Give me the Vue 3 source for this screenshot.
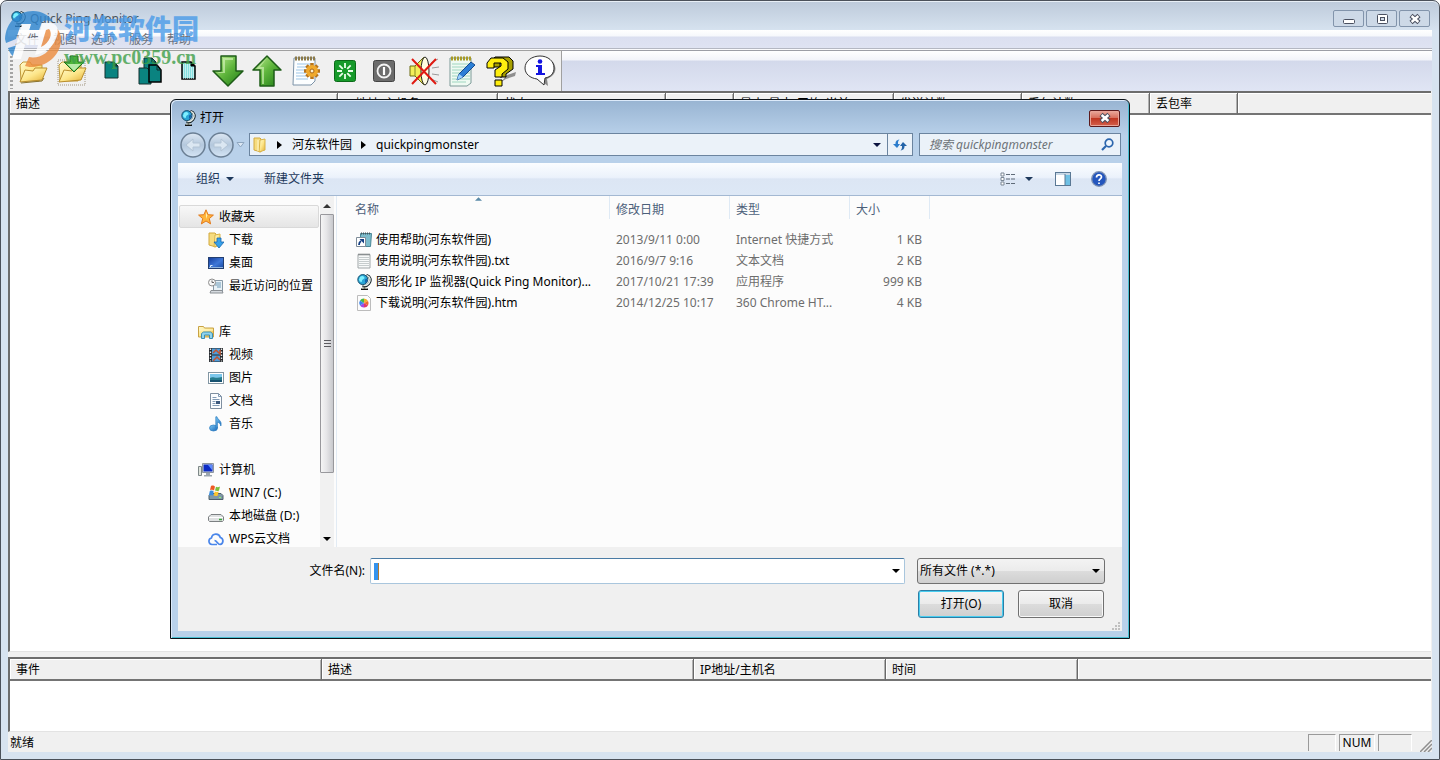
<template>
  <svg class="sprite" aria-hidden="true">
    <defs>
      <linearGradient id="gFolder" x1="0" y1="0" x2="1" y2="1">
        <stop offset="0" stop-color="#fffbd0" />
        <stop offset="0.5" stop-color="#fde68a" />
        <stop offset="1" stop-color="#e2ad33" />
      </linearGradient>
      <linearGradient id="gGreen" x1="0" y1="0" x2="1" y2="1">
        <stop offset="0" stop-color="#c9f29c" />
        <stop offset="0.5" stop-color="#5fb53c" />
        <stop offset="1" stop-color="#1d7a16" />
      </linearGradient>
      <linearGradient id="gBlue" x1="0" y1="0" x2="1" y2="1">
        <stop offset="0" stop-color="#7cc8f5" />
        <stop offset="1" stop-color="#1566b8" />
      </linearGradient>
      <linearGradient id="gScreen" x1="0" y1="0" x2="1" y2="1">
        <stop offset="0" stop-color="#123a9a" />
        <stop offset="0.55" stop-color="#3f78d8" />
        <stop offset="1" stop-color="#16479f" />
      </linearGradient>
      <linearGradient id="gNav" x1="0" y1="0" x2="0" y2="1">
        <stop offset="0" stop-color="#dde8f3" />
        <stop offset="0.5" stop-color="#b4c8dd" />
        <stop offset="1" stop-color="#d5e5f5" />
      </linearGradient>
    </defs>

    <symbol id="globe" viewBox="0 0 16 16">
      <path d="M10.5 1.2c4 1 5.200 5.300 2.500 8.600-1.500 1.900-4 2.800-6.500 2.200" fill="none" stroke="#17252c" stroke-width="2.600" />
      <path d="M10.800 1.500c3.500 1.200 4.300 4.800 2 7.800-1.300 1.700-3.300 2.500-5.500 2.300" fill="none" stroke="#e8efe8" stroke-width="1.500" />
      <circle cx="6.800" cy="5.600" r="5" fill="#2aa6d6" stroke="#17506e" stroke-width="1" />
      <path d="M4 3c2-2 4-1 4.500.5S6 5 6 7 3 7.500 3 5.500z" fill="#7ef0ff" />
      <path d="M9 5.500l2-1v3L9 9z" fill="#1563b0" />
      <path d="M5 15.200h7M8.500 12.500v2.500" stroke="#111" stroke-width="1.600" />
      <path d="M6 14h5" stroke="#c8cdb8" stroke-width="1" />
    </symbol>

    <symbol id="open" viewBox="0 0 32 32">
      <path d="M3 10l3-3h7l2 3h10v5l-3 11H4z" fill="url(#gFolder)" stroke="#c19a3a" />
      <path d="M3 27l5-12 8 1 2-3h12l-5 12z" fill="url(#gFolder)" stroke="#b98e2c" />
      <path d="M4 28l21-2 2-3" fill="none" stroke="#8a7430" stroke-width="1" />
    </symbol>
    <symbol id="load" viewBox="0 0 32 32">
      <path d="M2 5h27v25H2z" fill="none" stroke="#c9c3b8" stroke-width="2" stroke-dasharray="1 1" />
      <path d="M3 10l3-3h7l2 3h10v5l-3 11H4z" fill="url(#gFolder)" stroke="#c19a3a" />
      <path d="M3 27l5-12 8 1 2-3h12l-5 12z" fill="url(#gFolder)" stroke="#b98e2c" />
      <path d="M14 1h8v6h6l-10 10L8 7h6z" fill="#4fb63a" stroke="#1e6c1c" />
      <path d="M11 9h14l-7 7z" fill="#b8e9a8" />
    </symbol>
    <symbol id="doc" viewBox="0 0 32 32">
      <path d="M10 7h9l4 4v12H10z" fill="#0a8380" stroke="#14302f" />
      <path d="M19 7v4h4z" fill="#04494a" stroke="#0c2a2a" />
    </symbol>
    <symbol id="docs" viewBox="0 0 32 32">
      <path d="M10 3h8l4 4v13H10z" fill="#0a8380" stroke="#14302f" />
      <path d="M5 13h8l4 4v12H5z" fill="#0a8380" stroke="#14302f" />
      <path d="M15 10h8l4 5v12H15z" fill="#0a8380" stroke="#000" stroke-width="1.500" />
      <path d="M18 3v4h4M23 10v5h4" fill="none" stroke="#0c2a2a" />
    </symbol>
    <symbol id="newdoc" viewBox="0 0 32 32">
      <path d="M9 7h9l4 4v13H9z" fill="#86e0e0" stroke="#000" stroke-width="1.500" />
      <path d="M10 9h7M10 11h8M10 13h11M10 15h11M10 17h11M10 19h11M10 21h11M10 23h11" stroke="#fff" stroke-dasharray="1 1" />
      <path d="M18 7v4h4z" fill="#000" stroke="#000" />
    </symbol>
    <symbol id="down" viewBox="0 0 32 32">
      <path d="M9 1h15v15h7L16 31 1 16h8z" fill="url(#gGreen)" stroke="#1e5c18" stroke-width="1.500" stroke-linejoin="round" />
      <path d="M11 3h10v2H13v13h-6l-2-1h6z" fill="#d8f5c0" opacity="0.6" />
    </symbol>
    <symbol id="up" viewBox="0 0 32 32">
      <path d="M9 31h14V15h7L16 1 2 15h7z" fill="url(#gGreen)" stroke="#1e5c18" stroke-width="1.500" stroke-linejoin="round" />
      <path d="M16 3L5 14h6v15h2V12H9z" fill="#d8f5c0" opacity="0.6" />
    </symbol>
    <symbol id="config" viewBox="0 0 32 32">
      <path d="M4 3h21v23l-4 4H3z" fill="#fcfeff" stroke="#7c93a8" />
      <path d="M7 9h14M7 12h13M6 15h10M6 18h10M6 21h10M6 24h12" stroke="#9cc5e6" />
      <path d="M5 3.500h20" stroke="#8c7a4a" stroke-width="4" stroke-dasharray="2 1" />
      <path d="M22 8v16M14 16h16M16.500 10.500l11 11M27.500 10.500l-11 11" stroke="#b8741a" stroke-width="3.500" />
      <circle cx="22" cy="16" r="6" fill="#f0a92c" />
      <circle cx="22" cy="16" r="2" fill="#fff2d0" stroke="#a86412" />
    </symbol>
    <symbol id="start" viewBox="0 0 32 32">
      <rect x="5.500" y="5.500" width="21" height="21" rx="2" fill="#169a2a" stroke="#0b6a18" />
      <path d="M16 8v5M16 19v5M8 16h5M19 16h5M10.300 10.300l3.500 3.500M18.200 18.200l3.500 3.500M21.700 10.300l-3.500 3.500M13.800 18.200l-3.500 3.500" stroke="#eaffea" stroke-width="1.800" />
    </symbol>
    <symbol id="stop" viewBox="0 0 32 32">
      <rect x="5.500" y="5.500" width="21" height="21" rx="2" fill="#6c6c6c" stroke="#444" />
      <circle cx="16" cy="16" r="6.500" fill="none" stroke="#f4f4f4" stroke-width="1.800" />
      <path d="M16 12v8" stroke="#fff" stroke-width="2.200" />
    </symbol>
    <symbol id="mute" viewBox="0 0 32 32">
      <path d="M3 11h5l9-9v28l-9-9H3z" fill="#f3ee5a" stroke="#6a6a10" />
      <path d="M8 11v10" stroke="#8a8a20" />
      <ellipse cx="18" cy="16" rx="4" ry="14" fill="#fffde0" stroke="#222" />
      <path d="M24 8l7-4M25 13l7-1M25 19l7 1M24 24l7 3" stroke="#999" />
      <path d="M5 4l24 25M29 4L5 29" stroke="#e01a12" stroke-width="2" />
    </symbol>
    <symbol id="edit" viewBox="0 0 32 32">
      <path d="M4 3h21v25l-4 3H4z" fill="#effaf2" stroke="#7c9a98" />
      <path d="M6 9h18M6 12h18M6 15h18M6 18h18M6 21h18M6 24h18M6 27h14" stroke="#9fd6c0" />
      <path d="M5 3.500h20" stroke="#a89a28" stroke-width="4" stroke-dasharray="2 1" />
      <path d="M13 19L25 7l4 3-12 12-6 3z" fill="#2b7fd6" stroke="#164a8c" />
      <path d="M11 25l2-6 4 3z" fill="#9ad0ff" />
    </symbol>
    <symbol id="help" viewBox="0 0 32 32">
      <path d="M16 27l6-7 9-3-1 4-9 3z" fill="#8f8f8f" />
      <path d="M4 12V7l4-5h14l4 4v8l-7 5v3h-6v-7l6-4V8h-6v4z" transform="translate(2 0)" fill="#a8a000" stroke="#000" />
      <path d="M2 12V8l4-5h12l5 4v7l-6 5v3h-7v-7l6-4V8H9v5H2zM10 25h7v6h-7z" fill="#ffee10" stroke="#000" stroke-linejoin="round" />
    </symbol>
    <symbol id="info" viewBox="0 0 32 32">
      <path d="M29 7c5 7 2 14-6 17l1 7-8-6z" fill="#888" />
      <path d="M16 1c8 0 14 5 14 12 0 5-3 9-9 10l-1 7-7-6C6 23 1 19 1 13 1 6 8 1 16 1z" fill="#fff" stroke="#333" />
      <path d="M12 10h6v8h3v2h-9v-2h2v-6h-2z" fill="#1515e0" />
      <circle cx="16" cy="6.500" r="2.300" fill="#1515e0" />
    </symbol>

    <symbol id="folder" viewBox="0 0 16 16">
      <path d="M2 1h6l1 1v13l-7-2z" fill="#f6dc80" stroke="#d2a93e" />
      <path d="M8 3l5-1v11l-6 2z" fill="url(#gFolder)" stroke="#d9b44a" />
      <path d="M6 3v11" stroke="#fff7cc" />
    </symbol>
    <symbol id="star" viewBox="0 0 16 16">
      <path d="M8 .8l2.100 4.900 5.300.4-4.100 3.500 1.300 5.300L8 12l-4.600 2.900 1.300-5.300L.6 6.100l5.300-.4z" fill="#ffb53c" stroke="#e37a1c" />
      <path d="M8 3l1.300 3.500L8 10z" fill="#fff1b8" />
    </symbol>
    <symbol id="downloads" viewBox="0 0 16 16">
      <path d="M1 1h6l1 1v13l-7-2z" fill="#f6dc80" stroke="#d2a93e" />
      <path d="M7 3l5-1v11l-6 2z" fill="url(#gFolder)" stroke="#d9b44a" />
      <path d="M9 6h4v4h3l-5 6-5-6h3z" fill="#36a1ea" stroke="#1b67ae" stroke-width=".8" />
    </symbol>
    <symbol id="desktop" viewBox="0 0 16 16">
      <rect x=".5" y="2.500" width="15" height="11" fill="url(#gScreen)" stroke="#243f70" />
      <path d="M1 12.500h14" stroke="#91b5df" />
      <path d="M2.500 12v-1.500h2" stroke="#e0f0ff" fill="none" />
    </symbol>
    <symbol id="recent" viewBox="0 0 16 16">
      <path d="M5.500 2.500h9v11h-9z" fill="#e8f1f6" stroke="#8798a5" />
      <path d="M7 5h6M7 7h6M9 9h4" stroke="#6f9bb8" />
      <path d="M3 12.500h11l1 2.500H2z" fill="#d6dbe0" stroke="#8a8f94" />
      <circle cx="4" cy="4.500" r="3.500" fill="#f8f8f8" stroke="#8e8e8e" />
      <path d="M4 2.500v2h2" fill="none" stroke="#666" />
    </symbol>
    <symbol id="library" viewBox="0 0 16 16">
      <path d="M.5 2.500h5l1 1.500h9v9H.5z" fill="url(#gFolder)" stroke="#c8a245" />
      <path d="M1 6h14" stroke="#fff6c8" />
      <path d="M3.500 14.500v-5l2-1.500h7l2 1.500v5h-3V11h-5v3.500z" fill="#8fd4ee" stroke="#3d8fb3" />
    </symbol>
    <symbol id="video" viewBox="0 0 16 16">
      <path d="M1 1h14v14H1z" fill="#23282d" />
      <path d="M4 1.500h8v6H4zM4 8.500h8v6H4z" fill="#4e9ddb" />
      <path d="M5 6l3-3 4 4v-4M5 14l4-4 3 3" stroke="#c4532f" fill="none" stroke-width="1.500" />
      <path d="M2.500 1.500v13M13.500 1.500v13" stroke="#e8e8e8" stroke-width="1.400" stroke-dasharray="1.500 1.500" />
    </symbol>
    <symbol id="picture" viewBox="0 0 16 16">
      <rect x=".5" y="2.500" width="15" height="11" fill="#fff" stroke="#8296a3" />
      <path d="M2 4h12v8H2z" fill="#7cc7ec" />
      <path d="M2 8c3-2 5 1 12-1v5H2z" fill="#267c8e" />
      <path d="M2 10h12v2H2z" fill="#175270" />
    </symbol>
    <symbol id="document" viewBox="0 0 16 16">
      <path d="M2.500.5h8l3 3v12h-11z" fill="#fbfdff" stroke="#7f8fa0" />
      <path d="M10.500.5v3h3M4.500 4.500h4M4.500 6.500h7M4.500 8.500h3M4.500 10.500h3M4.500 12.500h7" fill="none" stroke="#829bb5" />
      <path d="M8 8h4v3H8z" fill="#3b587d" />
    </symbol>
    <symbol id="music" viewBox="0 0 16 16">
      <ellipse cx="5.500" cy="12" rx="4" ry="3" fill="url(#gBlue)" stroke="#2c7cc0" stroke-width=".7" />
      <path d="M7.800 12V.8H9c.5 3 5.500 4 3.800 9.200-.3-2.500-1.600-3.400-3.400-3.800V12z" fill="url(#gBlue)" stroke="#2c7cc0" stroke-width=".7" />
    </symbol>
    <symbol id="computer" viewBox="0 0 16 16">
      <path d="M.5 4.500h3v9h-3z" fill="#dfe4dc" stroke="#7d8788" />
      <path d="M4.500 1.500h11v9h-11z" fill="#d3d9e0" stroke="#8c96a0" />
      <path d="M5.500 2.500h9v7h-9z" fill="#0c2bc4" />
      <path d="M10 3h4v5z" fill="#5c8dff" />
      <path d="M8 11h4v2h2v1.500H6V13h2z" fill="#9da7b0" />
    </symbol>
    <symbol id="windrive" viewBox="0 0 16 16">
      <path d="M1 10.500l2-2h10l2 2v4H1z" fill="#7f99a8" stroke="#4e606b" />
      <path d="M3 1c2-1 3 0 4 .5L6 5.500C5 4.500 4 4.500 2 5z" fill="#ee5a24" />
      <path d="M8 1.800c1 .5 3 .5 4-.3l-1 4c-1 .8-3 .5-4 0z" fill="#7cbf3a" />
      <path d="M1.800 6c2-1 3 0 4 .5l-1 4c-1-.7-2-.7-4 0z" fill="#3b8ede" />
      <path d="M6.700 6.500c1 .6 3 .6 4 0l-1 4c-1 .8-3 .5-4 0z" fill="#fcc52c" />
      <path d="M11 12.500h2" stroke="#8cff5c" />
    </symbol>
    <symbol id="drive" viewBox="0 0 16 16">
      <path d="M.5 9l2.500-2.500h10L15.500 9v3.500l-1 1h-13l-1-1z" fill="#dfe1e2" stroke="#7c8082" />
      <path d="M1 9.500h14" stroke="#fff" />
      <path d="M11 11.500h3" stroke="#3aa53a" stroke-width="1.500" />
    </symbol>
    <symbol id="cloud" viewBox="0 0 16 16">
      <path d="M9 13.500H4A3.300 3.300 0 0 1 3.500 7a4.500 4.500 0 0 1 8.800-.5A3.600 3.600 0 0 1 12 13.500c-2.500 0-3-4-5.500-4" fill="none" stroke="#4a86ea" stroke-width="1.700" stroke-linejoin="round" />
    </symbol>
    <symbol id="shortcut" viewBox="0 0 16 16">
      <path d="M4.500 1.500h11l-1 13h-10z" fill="#7cbccc" stroke="#4a8796" />
      <path d="M5 1.500h10" stroke="#47565c" stroke-width="2" stroke-dasharray="1 1" />
      <path d="M.5 5.500h9v9h-9z" fill="#fff" stroke="#7e8c98" />
      <path d="M3 13c0-2 .5-3 2-4" fill="none" stroke="#123d82" stroke-width="1.800" />
      <path d="M3.500 7H8v4.500z" fill="#123d82" />
    </symbol>
    <symbol id="text" viewBox="0 0 16 16">
      <path d="M2 1.500h12v13.500H2z" fill="#f8fafa" stroke="#a0a6a8" />
      <path d="M3 4.500h10M3 6.500h10M3 8.500h10M3 10.500h10M3 12.500h10" stroke="#c6cccd" />
      <path d="M2.500 1.500h11" stroke="#74797a" stroke-width="2" stroke-dasharray="1 1" />
    </symbol>
    <symbol id="html" viewBox="0 0 16 16">
      <path d="M1.500.5h10l3 3v12h-13z" fill="#fcfcfc" stroke="#bcbcbc" />
      <path d="M8 8V3.500A4.500 4.500 0 0 1 12 6z" fill="#f2b22c" />
      <path d="M8 8l4-2a4.500 4.500 0 0 1 0 4.500z" fill="#f06a2c" />
      <path d="M8 8l4 2.500a4.500 4.500 0 0 1-4 2z" fill="#e03a6a" />
      <path d="M8 8v4.500A4.500 4.500 0 0 1 4 10.500z" fill="#a24be0" />
      <path d="M8 8l-4 2.500A4.500 4.500 0 0 1 4 5.500z" fill="#3884ee" />
      <path d="M8 8L4 5.500a4.500 4.500 0 0 1 4-2z" fill="#46b848" />
    </symbol>
    <symbol id="glyph-x" viewBox="0 0 14 12">
      <path d="M3 2.500l8 7M11 2.500l-8 7" stroke="#4a5060" stroke-width="4.600" />
      <path d="M3.600 3l6.800 6M10.400 3l-6.800 6" stroke="#fff" stroke-width="2.400" />
    </symbol>
    <symbol id="tri-down" viewBox="0 0 8 4">
      <path d="M0 0h8L4 4z" fill="currentColor" />
    </symbol>
    <symbol id="tri-right" viewBox="0 0 5 8">
      <path d="M0 0l5 4-5 4z" fill="currentColor" />
    </symbol>
  </svg>

  <div class="window">
    <header class="title-bar">
      <svg class="icon16"><use href="#globe" /></svg>
      <h1>Quick Ping Monitor</h1>
      <div class="window-buttons">
        <button aria-label="最小化">
          <svg width="14" height="12" viewBox="0 0 14 12"><rect x="1.500" y="6.500" width="11" height="4" rx="1" fill="#fff" stroke="#4a5060" /></svg>
        </button>
        <button aria-label="最大化">
          <svg width="14" height="12" viewBox="0 0 14 12"><rect x="2.500" y="1.500" width="10" height="9" rx="1" fill="#fff" stroke="#4a5060" /><rect x="5.500" y="4.500" width="4" height="3" fill="#d0d9e6" stroke="#4a5060" /></svg>
        </button>
        <button aria-label="关闭">
          <svg width="14" height="12"><use href="#glyph-x" /></svg>
        </button>
      </div>
    </header>

    <div class="client">
      <nav class="menu-bar">
        <button v-for="m in menus" :key="m">{{ m }}</button>
      </nav>

      <div class="tool-row">
        <div class="toolbar">
          <span class="gripper"></span>
          <button v-for="t in tools" :key="t.icon" :aria-label="t.label">
            <svg class="icon32"><use :href="'#' + t.icon" /></svg>
          </button>
        </div>
      </div>

      <section class="panel hosts">
        <table class="grid">
          <thead>
            <tr>
              <th v-for="c in hostColumns" :key="c.name" :style="{ width: c.width }">{{ c.name }}</th>
            </tr>
          </thead>
        </table>
      </section>

      <section class="panel events">
        <table class="grid">
          <thead>
            <tr>
              <th v-for="c in eventColumns" :key="c.name" :style="{ width: c.width }">{{ c.name }}</th>
            </tr>
          </thead>
        </table>
      </section>

      <footer class="status-bar">
        <span class="status-text">就绪</span>
        <span class="cell"></span>
        <span class="cell num">NUM</span>
        <span class="cell wide"></span>
        <svg class="size-grip" width="12" height="12" viewBox="0 0 12 12"><path d="M0 12L12 0M4 12l8-8M8 12l4-4" stroke="#8e8e8e" stroke-width="1.500" /></svg>
      </footer>
    </div>

    <div class="watermark">
      <svg width="60" height="60" viewBox="0 0 60 60">
        <path d="M1 29C2 12 14 1 29 1c9 0 16 4 20 11-4-2-8-2-11 0l-3 8H24l2-6h-9l-5 15-10 4z" fill="#2f86cf" />
        <path d="M4 38l13-4-5 15c-4-3-7-7-8-11z" fill="#2f86cf" />
        <path d="M40 15c11-1 17 5 17 14 0 15-12 26-27 28-3 0-6 0-9-1l4-9c9 2 22-3 24-17 1-6-2-9-9-9z" fill="#ec8a3c" />
        <path d="M18 14h9l-4 14h11l4-15h9c6 1 8 6 6 13-3 10-11 17-22 19l3-10H21l-4 14h-9z" fill="#fff" />
        <path d="M45 19c4 4 1 14-8 18l5-17z" fill="#ec8a3c" />
      </svg>
      <div class="watermark-text">
        <strong>河东软件园</strong>
        <span>www.pc0359.cn</span>
      </div>
    </div>

    <div class="dialog" role="dialog" aria-label="打开">
      <div class="dialog-title">
        <svg class="icon16"><use href="#globe" /></svg>
        <h2>打开</h2>
        <button class="close" aria-label="关闭">
          <svg width="14" height="12"><use href="#glyph-x" /></svg>
        </button>
      </div>

      <div class="nav-row">
        <div class="nav-buttons">
          <button aria-label="后退">
            <svg width="26" height="26" viewBox="0 0 26 26"><circle cx="13" cy="13" r="12" fill="url(#gNav)" stroke="#6b7f94" stroke-width="1.500" /><path d="M6 13l7-6v4h7v4h-7v4z" fill="#dbe7f2" stroke="#b3c4d5" /></svg>
          </button>
          <button aria-label="前进">
            <svg width="26" height="26" viewBox="0 0 26 26"><circle cx="13" cy="13" r="12" fill="url(#gNav)" stroke="#6b7f94" stroke-width="1.500" /><path d="M20 13l-7-6v4H6v4h7v4z" fill="#dbe7f2" stroke="#b3c4d5" /></svg>
          </button>
          <svg width="9" height="6" viewBox="0 0 9 6"><path d="M1 .5h7L4.500 5z" fill="#dce8f4" stroke="#8ea6bf" /></svg>
        </div>
        <div class="address">
          <svg class="icon16"><use href="#folder" /></svg>
          <svg class="crumb" width="5" height="8"><use href="#tri-right" /></svg>
          <a href="#">河东软件园</a>
          <svg class="crumb" width="5" height="8"><use href="#tri-right" /></svg>
          <a href="#">quickpingmonster</a>
          <svg class="address-arrow" width="8" height="4"><use href="#tri-down" /></svg>
          <button aria-label="刷新">
            <svg width="14" height="12" viewBox="0 0 14 12"><path d="M0 5l4 4 3-4H5c0-2 0-3 1.500-4.500C3 1 2.500 3 2.500 5z" fill="#2b7ccc" /><path d="M14 7l-4-4-3 4h2c0 2 0 3-1.500 4.500C11 11 11.500 9 11.500 7z" fill="#2263a8" /></svg>
          </button>
        </div>
        <div class="search">
          <input v-model="query" type="text" aria-label="搜索" placeholder="搜索 quickpingmonster" />
          <svg width="13" height="13" viewBox="0 0 13 13"><circle cx="8" cy="5" r="3.800" fill="#eef6fd" stroke="#2c66ad" stroke-width="1.700" /><path d="M5 8l-4 4" stroke="#2c66ad" stroke-width="2.200" /></svg>
        </div>
      </div>

      <div class="command-bar">
        <button>组织 <svg width="8" height="4"><use href="#tri-down" /></svg></button>
        <button>新建文件夹</button>
        <span class="spacer"></span>
        <button class="view" aria-label="更改视图">
          <svg width="16" height="14" viewBox="0 0 16 14"><path d="M1 1h3v3H1zM1 5.500h3v3H1zM1 10h3v3H1z" fill="#fff" stroke="#7b8794" /><path d="M6 2.500h10M6 7h10M6 11.500h10" stroke="#5f6b78" stroke-dasharray="4 1" /></svg>
          <svg width="8" height="4"><use href="#tri-down" /></svg>
        </button>
        <button aria-label="显示预览窗格">
          <svg width="16" height="14" viewBox="0 0 16 14"><rect x=".5" y=".5" width="15" height="13" fill="#fff" stroke="#5a7894" /><path d="M1 2h14" stroke="#8fb0cc" /><path d="M10 3h5v10h-5z" fill="#6fc0e4" /><path d="M10 2v11" stroke="#5a7894" /></svg>
        </button>
        <button aria-label="帮助">
          <svg width="16" height="16" viewBox="0 0 16 16"><circle cx="8" cy="8" r="7.300" fill="#2456bd" stroke="#7f93b4" stroke-width="1.300" /><path d="M5.500 6.500c0-3.500 5-3.500 5-.5 0 2-2.500 1.800-2.500 4M8 11.500v1.500" fill="none" stroke="#fff" stroke-width="1.700" /></svg>
        </button>
      </div>

      <div class="browser">
        <div class="tree">
          <ul v-for="group in tree" :key="group.name">
            <li class="group" :class="{ selected: group.selected }">
              <svg class="icon16"><use :href="'#' + group.icon" /></svg>{{ group.name }}
            </li>
            <li v-for="item in group.items" :key="item.name">
              <svg class="icon16"><use :href="'#' + item.icon" /></svg>{{ item.name }}
            </li>
          </ul>
        </div>
        <div class="scrollbar">
          <svg width="8" height="4" viewBox="0 0 8 4"><path d="M0 4h8L4 0z" fill="#333" /></svg>
          <div class="thumb"><i></i></div>
          <svg width="8" height="4"><use href="#tri-down" /></svg>
        </div>
        <div class="files">
          <svg class="sort" width="7" height="4" viewBox="0 0 8 4"><path d="M0 4h8L4 0z" fill="#5a8aa8" /></svg>
          <table>
            <thead>
              <tr>
                <th class="name">名称</th>
                <th class="date">修改日期</th>
                <th class="type">类型</th>
                <th class="size">大小</th>
                <th></th>
              </tr>
            </thead>
            <tbody>
              <tr v-for="f in files" :key="f.name">
                <td class="name"><span><svg class="icon16"><use :href="'#' + f.icon" /></svg>{{ f.name }}</span></td>
                <td>{{ f.date }}</td>
                <td>{{ f.type }}</td>
                <td class="size">{{ f.size }}</td>
                <td></td>
              </tr>
            </tbody>
          </table>
        </div>
      </div>

      <div class="dialog-footer">
        <div class="file-row">
          <label for="fileName">文件名(N):</label>
          <div class="combo">
            <span class="caret"></span>
            <input id="fileName" v-model="fileName" type="text" />
            <svg width="8" height="4"><use href="#tri-down" /></svg>
          </div>
          <div class="filter">
            <select v-model="filter" aria-label="文件类型">
              <option>所有文件 (*.*)</option>
            </select>
            <svg width="8" height="4"><use href="#tri-down" /></svg>
          </div>
        </div>
        <div class="action-row">
          <button class="primary">打开(O)</button>
          <button>取消</button>
        </div>
        <svg class="dialog-grip" width="8" height="8" viewBox="0 0 8 8"><path d="M6 0h2v2H6zM6 3h2v2H6zM6 6h2v2H6zM3 3h2v2H3zM3 6h2v2H3zM0 6h2v2H0z" fill="#c0c0c0" /></svg>
      </div>
    </div>
  </div>
</template>

<script setup>
import { ref } from 'vue'

const query = ref('')
const fileName = ref('')
const filter = ref('所有文件 (*.*)')

const menus = ['文件', '视图', '选项', '服务', '帮助']

const tools = [
  { icon: 'open', label: '打开' },
  { icon: 'load', label: '导入' },
  { icon: 'doc', label: '主机' },
  { icon: 'docs', label: '复制' },
  { icon: 'newdoc', label: '新建' },
  { icon: 'down', label: '下移' },
  { icon: 'up', label: '上移' },
  { icon: 'config', label: '选项' },
  { icon: 'start', label: '启动' },
  { icon: 'stop', label: '停止' },
  { icon: 'mute', label: '静音' },
  { icon: 'edit', label: '编辑' },
  { icon: 'help', label: '帮助' },
  { icon: 'info', label: '关于' }
]

// the last column has no width and takes what is left
const hostColumns = [
  { name: '描述', width: '328px' },
  { name: 'IP地址/主机名', width: '160px' },
  { name: '状态', width: '168px' },
  { name: '', width: '68px' },
  { name: '最小/最大/平均/当前', width: '160px' },
  { name: '发送计数', width: '128px' },
  { name: '丢包计数', width: '128px' },
  { name: '丢包率', width: '88px' },
  { name: ' ', width: 'auto' }
]

const eventColumns = [
  { name: '事件', width: '312px' },
  { name: '描述', width: '372px' },
  { name: 'IP地址/主机名', width: '192px' },
  { name: '时间', width: '192px' },
  { name: '', width: 'auto' }
]

const tree = [
  {
    name: '收藏夹',
    icon: 'star',
    selected: true,
    items: [
      { name: '下载', icon: 'downloads' },
      { name: '桌面', icon: 'desktop' },
      { name: '最近访问的位置', icon: 'recent' }
    ]
  },
  {
    name: '库',
    icon: 'library',
    items: [
      { name: '视频', icon: 'video' },
      { name: '图片', icon: 'picture' },
      { name: '文档', icon: 'document' },
      { name: '音乐', icon: 'music' }
    ]
  },
  {
    name: '计算机',
    icon: 'computer',
    items: [
      { name: 'WIN7 (C:)', icon: 'windrive' },
      { name: '本地磁盘 (D:)', icon: 'drive' },
      { name: 'WPS云文档', icon: 'cloud' }
    ]
  }
]

const files = [
  { name: '使用帮助(河东软件园)', icon: 'shortcut', date: '2013/9/11 0:00', type: 'Internet 快捷方式', size: '1 KB' },
  { name: '使用说明(河东软件园).txt', icon: 'text', date: '2016/9/7 9:16', type: '文本文档', size: '2 KB' },
  { name: '图形化 IP 监视器(Quick Ping Monitor)...', icon: 'globe', date: '2017/10/21 17:39', type: '应用程序', size: '999 KB' },
  { name: '下载说明(河东软件园).htm', icon: 'html', date: '2014/12/25 10:17', type: '360 Chrome HT...', size: '4 KB' }
]
</script>

<style>
body {
  margin: 0;
  background: #fff;
}
</style>

<style scoped>
* {
  box-sizing: border-box;
}

.sprite {
  position: absolute;
  width: 0;
  height: 0;
}

svg {
  flex: none;
  display: block;
}

.window {
  position: relative;
  display: flex;
  flex-direction: column;
  min-height: 100vh;
  padding: 0 7px 7px;
  border: 1px solid #4b515a;
  border-radius: 7px 7px 0 0;
  background: linear-gradient(#bdcada, #d7e3f0 30px);
  box-shadow: inset 0 1px 0 #e8eff6;
  font: 12px/16px "Noto Sans", "Noto Sans CJK SC", sans-serif;
  color: #000;
}

button,
input,
select {
  margin: 0;
  padding: 0;
  border: 0;
  background: none;
  font: inherit;
  color: inherit;
  outline: 0;
}

.icon16 {
  width: 16px;
  height: 16px;
}

.icon32 {
  width: 32px;
  height: 32px;
}

h1,
h2 {
  margin: 0;
  font-size: 12px;
  font-weight: normal;
}

.title-bar {
  display: flex;
  align-items: center;
  gap: 4px;
  height: 29px;
  padding: 6px 2px 0;
}

.title-bar h1 {
  flex: 1;
  color: #4b545e;
}

.window-buttons {
  display: flex;
  gap: 2px;
}

.window-buttons button {
  display: flex;
  align-items: center;
  justify-content: center;
  width: 31px;
  height: 17px;
  border: 1px solid #8294ab;
  border-radius: 2px;
  background: #cdd9e7;
}

.client {
  flex: 1;
  display: flex;
  flex-direction: column;
  background: #f0f0f0;
}

.menu-bar {
  display: flex;
  gap: 14px;
  height: 19px;
  padding: 2px 0 0 7px;
  border-bottom: 1px solid #b4b7c2;
  background: linear-gradient(#fff, #f6f8fc 6px, #dbdff0 7px, #dfe3f2);
  color: #6c7078;
}

.tool-row {
  height: 42px;
  border-top: 1px solid #fafafc;
  background: linear-gradient(#9c9ea6 1px, #fff 1px, #f2f4fa 10px, #d3d9eb 11px, #e0e5f4);
}

.toolbar {
  display: flex;
  width: max-content;
  height: 41px;
  padding-right: 2px;
  border-top: 1px solid #a0a0a0;
  border-right: 1px solid #a0a0a0;
  background: #f0f0f0;
}

.toolbar button {
  display: flex;
  align-items: center;
  justify-content: center;
  width: 39px;
}

.gripper {
  width: 3px;
  margin: 5px 0 2px 2px;
  background: repeating-linear-gradient(#a4a4a4 0 2px, #f0f0f0 2px 4px);
}

.panel {
  margin-right: 1px;
  border-top: 2px solid #6d6d6d;
  border-left: 2px solid #6d6d6d;
  border-bottom: 1px solid #e3e3e3;
  background: #fff;
}

.hosts {
  flex: 1;
  margin-bottom: 5px;
}

.events {
  height: 75px;
}

.grid {
  width: 100%;
  table-layout: fixed;
  border-collapse: separate;
  border-spacing: 0;
}

.grid th {
  height: 22px;
  padding: 1px 0 0 6px;
  border-right: 1px solid #696969;
  border-bottom: 2px solid #747474;
  background: #f0f0f0;
  box-shadow: inset 1px 1px 0 #fff, inset -1px 0 0 #b0b0b0;
  font-weight: normal;
  line-height: 18px;
  text-align: left;
  white-space: nowrap;
}

.grid th:last-child {
  border-right: 0;
  box-shadow: inset 1px 1px 0 #fff;
}

.status-bar {
  display: flex;
  align-items: center;
  gap: 3px;
  height: 20px;
  padding-left: 2px;
}

.status-text {
  flex: 1;
  padding-top: 2px;
}

.cell {
  width: 28px;
  height: 17px;
  border-top: 1px solid #9a9a9a;
  border-left: 1px solid #9a9a9a;
  border-right: 1px solid #fff;
}

.cell.num {
  width: 36px;
  text-align: center;
}

.cell.wide {
  width: 34px;
}

.size-grip {
  align-self: flex-end;
  margin-left: 5px;
}

/* site mark over the title and menu */
.watermark {
  position: absolute;
  top: 9px;
  left: 3px;
  display: flex;
  opacity: 0.8;
  pointer-events: none;
}

.watermark-text {
  display: flex;
  flex-direction: column;
  padding-top: 6px;
  font-family: "Liberation Serif", "Noto Sans CJK SC", serif;
}

.watermark-text strong {
  font-size: 27px;
  line-height: 28px;
  font-weight: 900;
  color: #4a9be8;
}

.watermark-text span {
  font-size: 20px;
  line-height: 26px;
  font-weight: bold;
  color: #3fa04a;
}

.dialog {
  position: absolute;
  top: 98px;
  left: 169px;
  right: 309px;
  padding: 0 7px 7px;
  border: 1px solid #0c1218;
  border-radius: 6px 6px 0 0;
  background: linear-gradient(#98b4d2, #b9d1ea 36px);
  box-shadow: inset 1px 1px 0 #dceafa, inset -1px -1px 0 #49bfd2;
}

.dialog-title {
  display: flex;
  align-items: center;
  gap: 4px;
  height: 32px;
  padding: 4px 2px 0;
}

.dialog-title h2 {
  flex: 1;
}

.close {
  display: flex;
  align-items: center;
  justify-content: center;
  width: 31px;
  height: 17px;
  border: 1px solid #5c1a1c;
  border-radius: 2px;
  background: linear-gradient(#e9a99c, #d8705e 45%, #bf3722 50%, #d4604c);
  box-shadow: inset 0 0 0 1px #e8a498;
}

.nav-row {
  display: flex;
  align-items: center;
  gap: 6px;
  height: 24px;
  margin-bottom: 7px;
  padding: 1px 1px 0 2px;
}

.nav-buttons {
  display: flex;
  align-items: center;
  gap: 2px;
  margin-right: -2px;
}

.address {
  flex: 1;
  display: flex;
  align-items: center;
  height: 23px;
  padding-left: 2px;
  border: 1px solid #6b849f;
  background: #ebf2f9;
}

.address a {
  color: #000;
  text-decoration: none;
}

.crumb {
  margin: 0 10px 0 9px;
}

.address-arrow {
  margin: 0 6px 0 auto;
  color: #0c1440;
}

.address button {
  display: flex;
  align-items: center;
  justify-content: center;
  align-self: stretch;
  width: 25px;
  border-left: 1px solid #6b849f;
}

.search {
  display: flex;
  align-items: center;
  width: 202px;
  height: 23px;
  padding: 0 6px 0 9px;
  border: 1px solid #6b849f;
  background: #ebf2f9;
}

.search input {
  flex: 1;
  min-width: 0;
  font-style: italic;
}

.search input::placeholder {
  color: #6d7278;
  opacity: 1;
}

.command-bar {
  display: flex;
  align-items: center;
  gap: 20px;
  height: 33px;
  padding: 0 15px 0 18px;
  border-bottom: 1px solid #a3b8d2;
  background: linear-gradient(#fbfdff, #ebf2fb 45%, #dce6f4 50%, #dde8f6);
  color: #1e395b;
}

.command-bar button {
  display: flex;
  align-items: center;
  gap: 6px;
  margin-right: 10px;
}

.command-bar button:last-child {
  margin-right: 0;
}

.command-bar .view {
  gap: 9px;
  margin-right: 2px;
}

.command-bar .view + button {
  margin-right: 0;
}

.spacer {
  flex: 1;
}

.browser {
  display: flex;
  height: 351px;
  background: #fcfcfc;
}

.tree {
  width: 142px;
  padding: 9px 1px 0;
  overflow: hidden;
}

.tree ul {
  margin: 0 0 23px;
  padding: 0;
  list-style: none;
}

.tree li {
  display: flex;
  align-items: center;
  gap: 5px;
  height: 23px;
  padding-left: 29px;
  white-space: nowrap;
}

.tree .group {
  padding-left: 19px;
}

.tree .selected {
  padding-left: 18px;
  border: 1px solid #d9d9d9;
  border-radius: 2px;
  background: linear-gradient(#f8f8f8, #e5e5e5);
}

.scrollbar {
  display: flex;
  flex-direction: column;
  align-items: center;
  width: 14px;
  padding: 8px 0 6px;
  background: #f1f1f1;
}

.thumb {
  display: flex;
  align-items: center;
  justify-content: center;
  width: 14px;
  height: 259px;
  margin: 6px 0 auto;
  border: 1px solid #98989c;
  border-radius: 1px;
  background: linear-gradient(90deg, #f5f5f5, #e6e6e8 45%, #c8c9cd);
}

.thumb i {
  width: 7px;
  height: 8px;
  background: repeating-linear-gradient(#5c5c60 0 1px, transparent 1px 3px);
}

.files {
  position: relative;
  flex: 1;
  min-width: 0;
  margin-left: 2px;
  border-left: 1px solid #e2ebf4;
}

.sort {
  position: absolute;
  top: 1px;
  left: 138px;
}

.files table {
  width: 100%;
  table-layout: fixed;
  border-collapse: separate;
  border-spacing: 0;
}

.files th {
  height: 33px;
  padding: 0;
  font-weight: normal;
  text-align: left;
  vertical-align: top;
  line-height: 28px;
  color: #4c607a;
  background: linear-gradient(#dfeaf5, #dfeaf5) right top / 1px 23px no-repeat;
}

.files th:last-child {
  background: none;
}

.files th.name {
  width: 273px;
  padding-left: 18px;
}

.files th.date,
.files th.type {
  width: 120px;
  padding-left: 6px;
}

.files th.size {
  width: 80px;
  padding-left: 6px;
}

.files td {
  height: 21px;
  padding: 0 0 0 6px;
  color: #6d6d6d;
  white-space: nowrap;
}

.files td.name {
  padding-left: 19px;
  color: #000;
}

.files td.name span {
  display: flex;
  align-items: center;
  gap: 4px;
}

.files td.size {
  padding-right: 8px;
  text-align: right;
}

.dialog-footer {
  position: relative;
  height: 84px;
  padding: 11px 17px 0 0;
  background: #f0f0f0;
}

.file-row {
  display: grid;
  grid-template-columns: 187px 1fr 188px;
  align-items: center;
}

.file-row label {
  text-align: right;
}

.combo {
  display: flex;
  align-items: center;
  height: 26px;
  margin: 0 12px 0 5px;
  padding: 0 4px 0 3px;
  border: 1px solid #a9c6dd;
  border-top-color: #4a7ba4;
  border-radius: 2px;
  background: #fff;
}

.combo input {
  flex: 1;
  min-width: 0;
}

.caret {
  width: 5px;
  height: 17px;
  border-right: 1px solid #b07830;
  background: #3393ee;
}

.filter {
  position: relative;
}

.filter select {
  display: block;
  width: 100%;
  height: 26px;
  padding: 0 20px 0 2px;
  border: 1px solid #707070;
  border-radius: 3px;
  appearance: none;
  background: linear-gradient(#f3f3f3, #ebebeb 50%, #dcdcdc 51%, #cfcfcf);
}

.filter svg {
  position: absolute;
  top: 11px;
  right: 5px;
  pointer-events: none;
}

.action-row {
  display: flex;
  justify-content: flex-end;
  gap: 14px;
  margin-top: 6px;
  padding-right: 1px;
}

.action-row button {
  width: 86px;
  height: 28px;
  border: 1px solid #707070;
  border-radius: 3px;
  background: linear-gradient(#f4f4f4, #ebebeb 50%, #dcdcdc 51%, #cfcfcf);
  box-shadow: inset 0 0 0 1px #f8f8f8;
}

.action-row .primary {
  border-color: #2c7ea6;
  box-shadow: inset 0 0 0 1px #48cdf0;
}

.dialog-grip {
  position: absolute;
  right: 2px;
  bottom: 1px;
}
</style>
